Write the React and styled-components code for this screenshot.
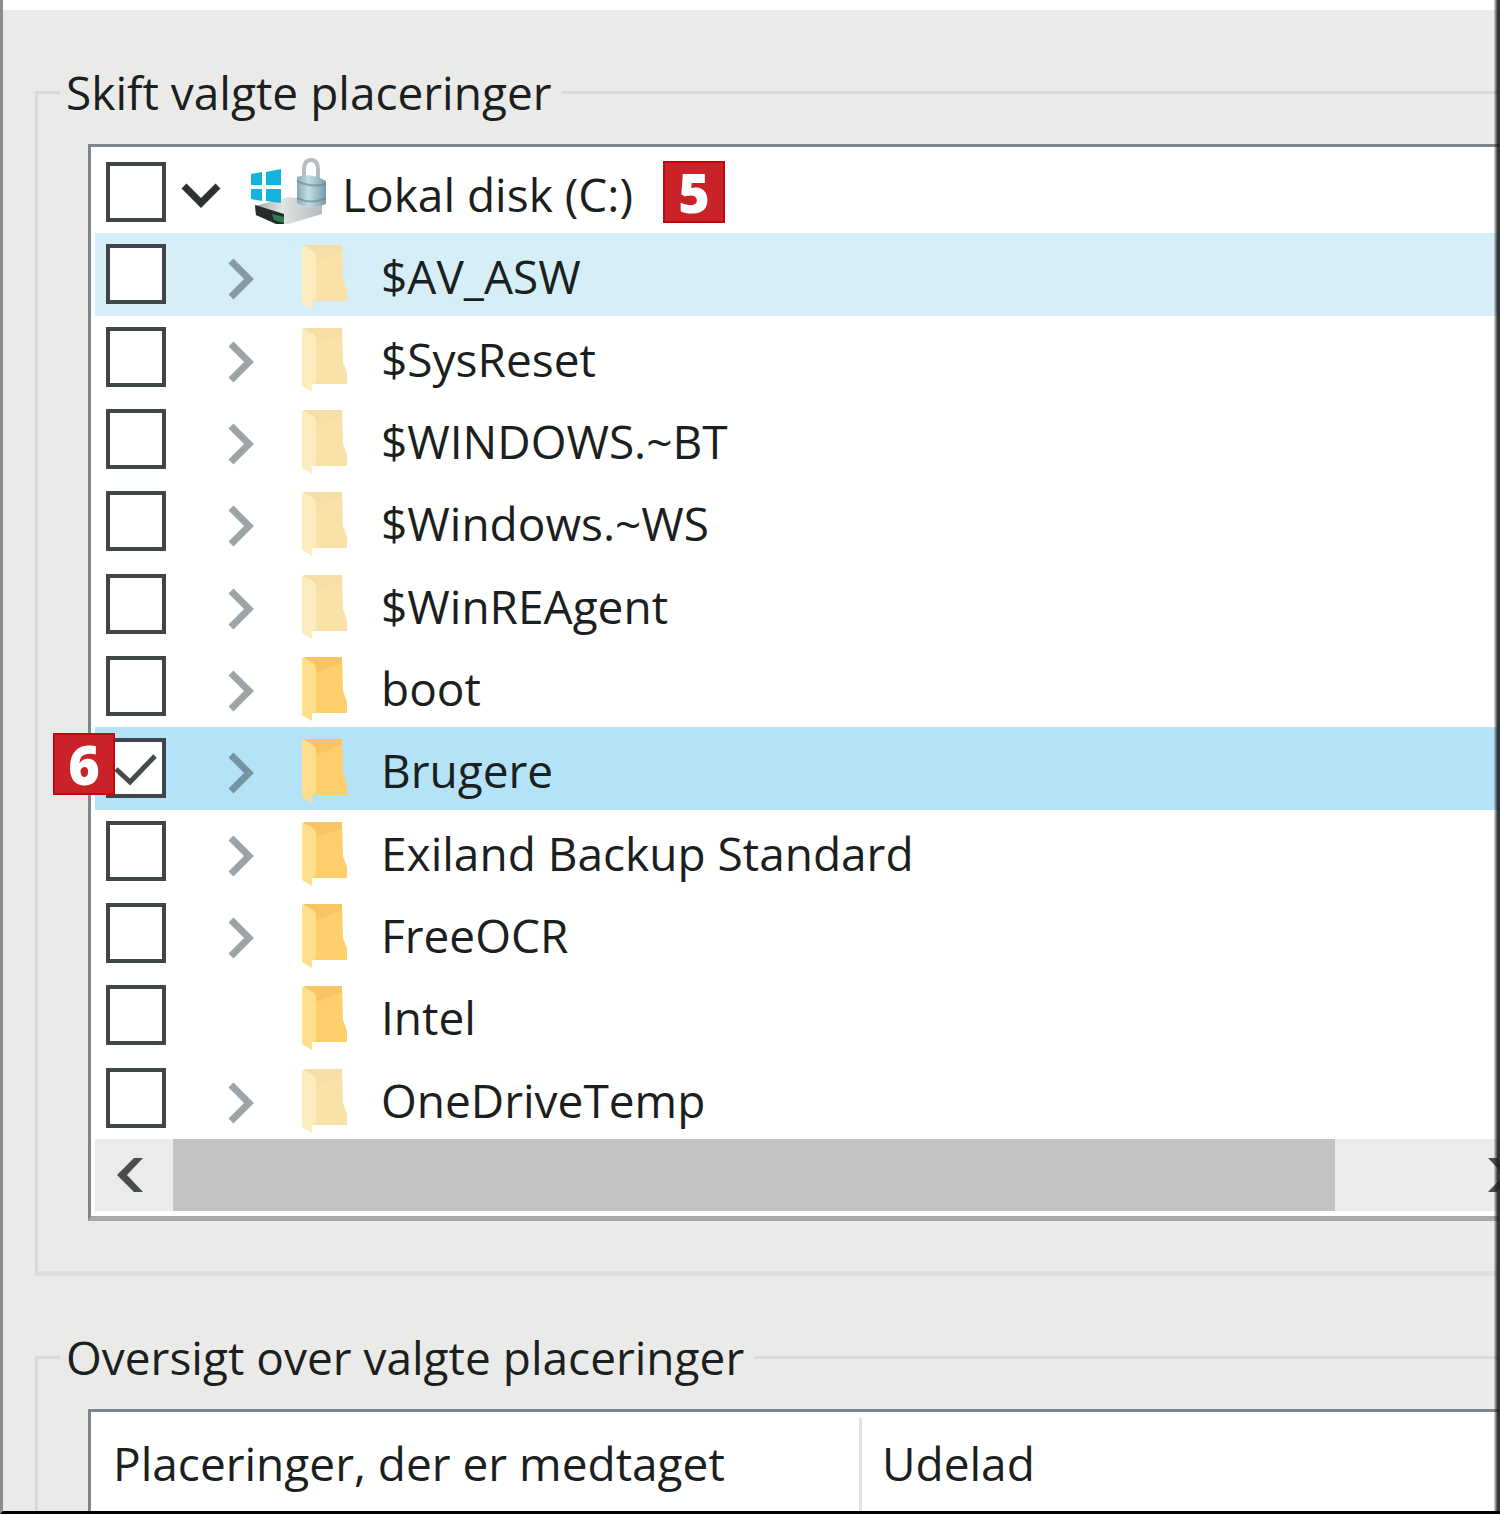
import { useState } from "react";
import styled, { createGlobalStyle, css } from "styled-components";

const folders = [
  { name: "$AV_ASW", faded: true, arrow: true, hover: true },
  { name: "$SysReset", faded: true, arrow: true },
  { name: "$WINDOWS.~BT", faded: true, arrow: true },
  { name: "$Windows.~WS", faded: true, arrow: true },
  { name: "$WinREAgent", faded: true, arrow: true },
  { name: "boot", arrow: true },
  { name: "Brugere", arrow: true, selected: true, badge: 6 },
  { name: "Exiland Backup Standard", arrow: true },
  { name: "FreeOCR", arrow: true },
  { name: "Intel" },
  { name: "OneDriveTemp", faded: true, arrow: true },
];

const FolderIcon = ({ faded }) => (
  <svg width="46" height="70" viewBox="0 -6 46 70" aria-hidden="true">
    <path d="M3 0H41L42 34L46 45V56H10L3 50Z" fill={faded ? "#fae1a8" : "#fdcf6b"} />
    <path d="M3 0H41V6L15 16Z" fill={faded ? "#f3dda6" : "#f6c161"} opacity="0.7" />
    <path d="M1 0L12 6Q15 8 15 12V52Q15 55 11 56V64L1 58Z" fill={faded ? "#fdecbd" : "#ffde8c"} />
  </svg>
);

const DriveIcon = () => (
  <svg width="80" height="70" viewBox="0 0 80 70" aria-hidden="true">
    <defs>
      <linearGradient id="drive" x1="0" y1="0" x2="1" y2="0">
        <stop offset="0" stopColor="#9ea3a3" />
        <stop offset="0.4" stopColor="#e2e4e4" />
        <stop offset="1" stopColor="#b4babc" />
      </linearGradient>
      <linearGradient id="lock" x1="0" y1="0" x2="1" y2="0">
        <stop offset="0" stopColor="#8fa9b4" />
        <stop offset="0.4" stopColor="#c3dde6" />
        <stop offset="1" stopColor="#7f98a5" />
      </linearGradient>
    </defs>
    <path d="M5 49L38 40L72 44V57L38 67L30 67L6 58Z" fill="url(#drive)" />
    <path d="M5 48L34 57V67L26 67L6 58Z" fill="#252c2b" />
    <path d="M22 57L34 60V66L24 63Z" fill="#2f7d50" />
    <path d="M54 23V13Q54 3 61 3Q68 3 68 13V23" fill="none" stroke="#b4bdc1" strokeWidth="4" />
    <path d="M47 20Q60 15 76 24V47Q61 54 47 46Z" fill="url(#lock)" />
    <path d="M47 24Q61 31 76 27M47 41Q61 48 76 41" fill="none" stroke="#5e8698" strokeWidth="2" opacity="0.6" />
    <path d="M1 17L12 15V28H1ZM16 15L31 12V28H16ZM1 32H12V44L1 42ZM16 32H31V46L16 44Z" fill="#12b4dd" />
  </svg>
);

const App = () => {
  const [checked, setChecked] = useState({ Brugere: true });

  const toggle = (name) =>
    setChecked((prev) => ({ ...prev, [name]: !prev[name] }));

  return (
    <Window>
      <GlobalStyle />
      <TopStrip />
      <Content>
        <Group>
          <Legend>Skift valgte placeringer</Legend>
          <TreeBox>
            <Tree>
              <Row>
                <Check
                  id="root"
                  checked={!!checked.root}
                  onChange={() => toggle("root")}
                />
                <Expander $root aria-label="Skjul Lokal disk">
                  <svg width="42" height="62" viewBox="0 0 42 62">
                    <path d="M4 25L21 42L38 25" />
                  </svg>
                </Expander>
                <DriveIcon />
                <Name htmlFor="root-box" $root>
                  Lokal disk (C:)
                </Name>
                <Badge>5</Badge>
              </Row>
              {folders.map((f) => (
                <Row key={f.name} $hover={f.hover} $selected={f.selected}>
                  <Check
                    id={f.name}
                    checked={!!checked[f.name]}
                    onChange={() => toggle(f.name)}
                  />
                  <Expander
                    aria-label={`Udvid ${f.name}`}
                    $blank={!f.arrow}
                    disabled={!f.arrow}
                  >
                    <svg width="30" height="62" viewBox="0 0 30 62">
                      <path d="M4 18L22 36L4 54" />
                    </svg>
                  </Expander>
                  <FolderIcon faded={f.faded} />
                  <Name htmlFor={`${f.name}-box`}>{f.name}</Name>
                  {f.badge && <Badge $floating>{f.badge}</Badge>}
                </Row>
              ))}
            </Tree>
            <Scrollbar>
              <ScrollButton aria-label="Rul til venstre">
                <svg width="28" height="36" viewBox="0 0 28 36">
                  <path d="M18 1H27L11 18L27 35H18L1 18Z" />
                </svg>
              </ScrollButton>
              <Track>
                <Thumb />
              </Track>
              <ScrollButton $right aria-label="Rul til højre">
                <svg width="28" height="36" viewBox="0 0 28 36">
                  <path d="M10 1H1L17 18L1 35H10L27 18Z" />
                </svg>
              </ScrollButton>
            </Scrollbar>
          </TreeBox>
        </Group>
        <Group $last>
          <Legend>Oversigt over valgte placeringer</Legend>
          <Overview>
            <thead>
              <tr>
                <HeadCell $first>Placeringer, der er medtaget</HeadCell>
                <HeadCell>Udelad</HeadCell>
              </tr>
            </thead>
          </Overview>
        </Group>
      </Content>
    </Window>
  );
};

const Check = ({ id, checked, onChange }) => (
  <CheckWrap>
    <input id={`${id}-box`} type="checkbox" checked={checked} onChange={onChange} />
    {checked && (
      <svg width="60" height="60" viewBox="0 0 60 60" aria-hidden="true">
        <path d="M10 31L24 44L49 18" />
      </svg>
    )}
  </CheckWrap>
);

export default App;

const GlobalStyle = createGlobalStyle`
  * {
    box-sizing: border-box;
  }
  body {
    margin: 0;
    font-family: "Open Sans", "Noto Sans", sans-serif;
    font-size: 46px;
    line-height: 62px;
    color: #1c1f20;
    background-color: #eaebe9;
  }
`;

const Window = styled.div`
  position: relative;
  display: flex;
  flex-direction: column;
  height: 100vh;
  overflow: hidden;
  border-left: 3px solid #8b8c8b;
  border-bottom: 3px solid #000;

  &::after {
    content: "";
    position: absolute;
    top: 0;
    right: 0;
    bottom: 0;
    width: 6px;
    pointer-events: none;
    background: linear-gradient(to right, rgba(0, 0, 0, 0.1), rgba(30, 32, 33, 0.9) 60%);
  }
`;

const TopStrip = styled.div`
  flex: 0 0 10px;
  background-color: #fff;
`;

const Content = styled.main`
  flex: 1;
  min-height: 0;
  display: flex;
  flex-direction: column;
  gap: 50px;
  padding: 51px 0 0 32px;
`;

const Group = styled.fieldset`
  min-width: 0;
  margin: 0;
  padding: 21px 0 50px 50px;
  border: 3px solid #d8dad7;
  border-bottom: 5px solid #dddfdc;
  border-right: none;

  ${({ $last }) =>
    $last &&
    css`
      flex: 1;
      padding-bottom: 0;
      border-bottom: none;
      display: flex;
    `}
`;

const Legend = styled.legend`
  margin-left: -28px;
  padding: 0 10px 0 6px;
`;

const TreeBox = styled.div`
  padding: 4px 0 5px 4px;
  background-color: #fff;
  border: 3px solid #7d868c;
  border-bottom: 5px solid #a7a9ac;
  border-right: none;
`;

const Tree = styled.div`
  display: grid;
  grid-auto-rows: 1fr;
  height: 988px;
`;

const Row = styled.div`
  position: relative;
  display: flex;
  align-items: center;
  padding-left: 11px;
  background-color: ${({ $hover, $selected }) =>
    $selected ? "#b4e3f8" : $hover ? "#d5eef8" : "transparent"};
`;

const CheckWrap = styled.span`
  position: relative;
  flex: 0 0 60px;
  height: 60px;

  input {
    appearance: none;
    display: block;
    width: 60px;
    height: 60px;
    margin: 0;
    border: 4px solid #404647;
    background-color: #fff;
  }
  svg {
    position: absolute;
    inset: 0;
    pointer-events: none;
  }
  path {
    fill: none;
    stroke: #454b4d;
    stroke-width: 5px;
  }
`;

const Expander = styled.button`
  flex: none;
  display: flex;
  width: ${({ $root }) => ($root ? "84px" : "135px")};
  padding: 0 0 0 ${({ $root }) => ($root ? "14px" : "61px")};
  border: none;
  background: none;
  visibility: ${({ $blank }) => ($blank ? "hidden" : "visible")};

  path {
    fill: none;
    stroke: ${({ $root }) => ($root ? "#2e3132" : "rgba(40, 50, 60, 0.45)")};
    stroke-width: 7px;
  }
`;

const Name = styled.label`
  margin-left: ${({ $root }) => ($root ? "12px" : "34px")};
  padding-top: 4px;
  white-space: nowrap;
`;

const Badge = styled.span`
  display: flex;
  align-items: center;
  justify-content: center;
  width: 62px;
  height: 62px;
  margin-left: 30px;
  border: 2px solid #c4070c;
  background-color: #c92229;
  color: #fff;
  font-family: "Noto Sans", "Open Sans", sans-serif;
  font-size: 54px;
  font-weight: 900;

  ${({ $floating }) =>
    $floating &&
    css`
      position: absolute;
      top: 6px;
      left: -42px;
      margin-left: 0;
    `}
`;

const Scrollbar = styled.div`
  display: flex;
  height: 72px;
  background-color: #ebebea;
`;

const ScrollButton = styled.button`
  flex: 0 0 ${({ $right }) => ($right ? "43px" : "78px")};
  display: flex;
  align-items: center;
  padding: 0 0 0 ${({ $right }) => ($right ? "30px" : "21px")};
  overflow: hidden;
  border: none;
  background: none;
  fill: #4a4d4e;

  svg {
    flex: none;
  }
`;

const Track = styled.div`
  flex: 1;
`;

const Thumb = styled.div`
  width: 90.5%;
  height: 100%;
  background-color: #c2c4c3;
`;

const Overview = styled.table`
  flex: 1;
  width: 100%;
  height: 100%;
  table-layout: fixed;
  border-spacing: 0;
  padding-top: 6px;
  background-color: #fff;
  border: 3px solid #7d868c;
  border-right: none;
  border-bottom: none;
`;

const HeadCell = styled.th`
  width: ${({ $first }) => ($first ? "771px" : "auto")};
  padding: 0 0 4px ${({ $first }) => ($first ? "22px" : "20px")};
  border-right: ${({ $first }) => ($first ? "3px solid #dfe2e2" : "none")};
  font-weight: 400;
  text-align: left;
`;
